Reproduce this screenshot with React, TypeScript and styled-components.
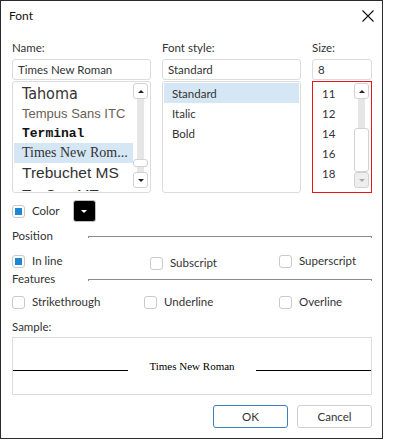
import React from "react";
import styled, { createGlobalStyle, css } from "styled-components";

const GlobalStyle = createGlobalStyle`
  html, body { margin: 0; padding: 0; background: #fff; }
  body {
    font-family: Lato, "Liberation Sans", sans-serif;
    font-size: 11.5px;
    color: #333;
  }
  * { box-sizing: border-box; }
`;

const Dialog = styled.div`
  width: 383px;
  height: 439px;
  border: 1px solid #2b2b2b;
  background: #fff;
  display: flex;
  flex-direction: column;
`;

const TitleBar = styled.div`
  height: 29px;
  display: flex;
  align-items: center;
  justify-content: space-between;
  padding: 0 8px 0 8px;
  font-size: 12px;
  color: #111;
`;

const Body = styled.div`
  padding: 10px 10px 0 11px;
  display: flex;
  flex-direction: column;
`;

const Columns = styled.div`
  display: grid;
  grid-template-columns: 139px 139px 60px;
  column-gap: 11px;
`;

const Column = styled.div`
  display: flex;
  flex-direction: column;
`;

const Label = styled.div`
  line-height: 15px;
  height: 15px;
  margin-bottom: 4px;
`;

const Input = styled.div`
  height: 21px;
  line-height: 19px;
  border: 1px solid #dcdcdc;
  border-radius: 3px;
  padding: 0 5px;
  color: #333;
`;

const List = styled.div<{ $invalid?: boolean }>`
  margin-top: 1px;
  height: 112px;
  border: 1px solid ${({ $invalid }) => ($invalid ? "#e8151b" : "#dcdcdc")};
  border-radius: ${({ $invalid }) => ($invalid ? "0" : "3px")};
  padding: 1px;
  display: flex;
  overflow: hidden;
`;

const Items = styled.div`
  flex: 1;
  display: flex;
  flex-direction: column;
  overflow: hidden;
`;

const Item = styled.div<{
  $selected?: boolean;
  $font?: string;
  $size?: number;
  $weight?: number;
  $color?: string;
  $drop?: number;
}>`
  flex: 0 0 20px;
  height: 20px;
  display: flex;
  align-items: center;
  padding-left: 8px;
  padding-top: ${({ $drop }) => $drop || 0}px;
  white-space: nowrap;
  overflow: hidden;
  background: ${({ $selected }) => ($selected ? "#d5e6f5" : "transparent")};
  font-family: ${({ $font }) => $font || "inherit"};
  font-size: ${({ $size }) => ($size ? `${$size}px` : "inherit")};
  font-weight: ${({ $weight }) => $weight || 400};
  color: ${({ $color }) => $color || "#333"};
`;

const Scrollbar = styled.div`
  width: 15px;
  margin: 0 1px 3px 0;
  display: flex;
  flex-direction: column;
`;

const ScrollButton = styled.div<{ $disabled?: boolean }>`
  height: 16px;
  border: 1px solid #d2d2d2;
  border-radius: 3px;
  background: ${({ $disabled }) => ($disabled ? "#eeeeee" : "#fff")};
  display: flex;
  align-items: center;
  justify-content: center;
`;

const Arrow = styled.span<{ $down?: boolean; $disabled?: boolean }>`
  width: 0;
  height: 0;
  border-left: 3px solid transparent;
  border-right: 3px solid transparent;
  ${({ $down, $disabled }) =>
    $down
      ? css`border-top: 3px solid ${$disabled ? "#aaa" : "#222"};`
      : css`border-bottom: 3px solid ${$disabled ? "#aaa" : "#222"};`}
`;

const Track = styled.div`
  flex: 1;
  background: linear-gradient(#e6e6e6, #e6e6e6) center / 7px 100% no-repeat;
`;

const Thumb = styled.div<{ $offset: number; $height: number }>`
  margin-top: ${({ $offset }) => $offset}px;
  height: ${({ $height }) => $height}px;
  border: 1px solid #d2d2d2;
  border-radius: 3px;
  background: #fff;
`;

const Row = styled.div<{ $top: number }>`
  margin-top: ${({ $top }) => $top}px;
  display: flex;
  align-items: center;
`;

const Box = styled.span<{ $checked?: boolean }>`
  width: 13px;
  height: 13px;
  flex: 0 0 13px;
  border: 1px solid #cacaca;
  border-radius: 3px;
  background: #fff;
  display: flex;
  align-items: center;
  justify-content: center;
  &::after {
    content: "";
    width: 7px;
    height: 7px;
    background: ${({ $checked }) => ($checked ? "#1f86d3" : "transparent")};
  }
`;

const CheckText = styled.span`
  margin-left: 7px;
  line-height: 14px;
`;

const Check = styled.label<{ $shift?: number }>`
  display: flex;
  align-items: center;
  height: 14px;
  margin-top: ${({ $shift }) => $shift || 0}px;
`;

const ColorButton = styled.div`
  margin-left: 13px;
  width: 23px;
  height: 22px;
  background: #000;
  border: 1px solid #bdbdbd;
  border-radius: 3px;
  display: flex;
  align-items: center;
  justify-content: center;
`;

const WhiteArrow = styled.span`
  width: 0;
  height: 0;
  border-left: 3px solid transparent;
  border-right: 3px solid transparent;
  border-top: 3px solid #fff;
`;

const Section = styled.div<{ $top: number }>`
  margin-top: ${({ $top }) => $top}px;
  height: 14px;
  line-height: 14px;
  display: grid;
  grid-template-columns: 76px 1fr;
  align-items: center;
`;

const Rule = styled.div`
  height: 1px;
  background: #8c8c8c;
  position: relative;
  &::before,
  &::after {
    content: "";
    position: absolute;
    top: 1px;
    width: 1px;
    height: 1px;
    background: #8c8c8c;
  }
  &::before { left: 0; }
  &::after { right: 0; }
`;

const Options = styled.div<{ $cols: string; $top: number }>`
  margin-top: ${({ $top }) => $top}px;
  display: grid;
  grid-template-columns: ${({ $cols }) => $cols};
  align-items: start;
  height: 14px;
`;

const SampleLabel = styled.div`
  margin-top: 11px;
  line-height: 14px;
  height: 14px;
`;

const SampleBox = styled.div`
  margin-top: 3px;
  height: 58px;
  border: 1px solid #dcdcdc;
  display: grid;
  grid-template-columns: 1fr auto 1fr;
  column-gap: 21px;
  align-items: center;
`;

const SampleLine = styled.div`
  height: 1px;
  background: #000;
  margin-top: 8px;
`;

const SampleText = styled.span`
  font-family: "Liberation Serif", serif;
  font-size: 11px;
  color: #000;
`;

const Buttons = styled.div`
  margin-top: 10px;
  display: flex;
  justify-content: flex-end;
  gap: 9px;
`;

const Button = styled.button<{ $primary?: boolean }>`
  width: 75px;
  height: 23px;
  border: 1px solid ${({ $primary }) => ($primary ? "#3b82bd" : "#d0d0d0")};
  border-radius: 3px;
  background: #fff;
  font: inherit;
  color: #333;
  padding: 0;
`;

const CloseIcon = () => (
  <svg width="12" height="12" viewBox="0 0 12 12">
    <path d="M0.5 0.5 L11.5 11.5 M11.5 0.5 L0.5 11.5" stroke="#111" strokeWidth="1.1" fill="none" />
  </svg>
);

const fonts = [
  { name: "Tahoma", font: '"DejaVu Sans Condensed", "DejaVu Sans", sans-serif', size: 16 },
  { name: "Tempus Sans ITC", font: '"Liberation Sans", sans-serif', size: 13, color: "#6b5e55" },
  { name: "Terminal", font: '"Liberation Mono", monospace', size: 13, weight: 700, color: "#111" },
  { name: "Times New Rom...", font: '"Liberation Serif", serif', size: 14, selected: true },
  { name: "Trebuchet MS", font: '"Liberation Sans", sans-serif', size: 15.5 },
  { name: "Tw Cen MT", font: '"Liberation Sans", sans-serif', size: 15, drop: 3 },
];

const styles = ["Standard", "Italic", "Bold"];
const sizes = ["11", "12", "14", "16", "18"];

const ScrollBarView: React.FC<{ offset: number; height: number; downDisabled?: boolean }> = ({
  offset,
  height,
  downDisabled,
}) => (
  <Scrollbar>
    <ScrollButton>
      <Arrow />
    </ScrollButton>
    <Track>
      <Thumb $offset={offset} $height={height} />
    </Track>
    <ScrollButton $disabled={downDisabled}>
      <Arrow $down $disabled={downDisabled} />
    </ScrollButton>
  </Scrollbar>
);

export default function App() {
  return (
    <>
      <GlobalStyle />
      <Dialog>
        <TitleBar>
          <span>Font</span>
          <CloseIcon />
        </TitleBar>
        <Body>
          <Columns>
            <Column>
              <Label>Name:</Label>
              <Input>Times New Roman</Input>
              <List>
                <Items>
                  {fonts.map((f) => (
                    <Item
                      key={f.name}
                      $selected={f.selected}
                      $font={f.font}
                      $size={f.size}
                      $weight={f.weight}
                      $color={f.color}
                      $drop={f.drop}
                    >
                      {f.name}
                    </Item>
                  ))}
                </Items>
                <ScrollBarView offset={60} height={8} />
              </List>
            </Column>
            <Column>
              <Label>Font style:</Label>
              <Input>Standard</Input>
              <List>
                <Items>
                  {styles.map((s, i) => (
                    <Item key={s} $selected={i === 0}>
                      {s}
                    </Item>
                  ))}
                </Items>
              </List>
            </Column>
            <Column>
              <Label>Size:</Label>
              <Input>8</Input>
              <List $invalid>
                <Items>
                  {sizes.map((s) => (
                    <Item key={s}>{s}</Item>
                  ))}
                </Items>
                <ScrollBarView offset={29} height={44} downDisabled />
              </List>
            </Column>
          </Columns>

          <Row $top={7}>
            <Check>
              <Box $checked />
              <CheckText>Color</CheckText>
            </Check>
            <ColorButton>
              <WhiteArrow />
            </ColorButton>
          </Row>

          <Section $top={7}>
            <span>Position</span>
            <Rule />
          </Section>
          <Options $cols="138px 129px 1fr" $top={11}>
            <Check>
              <Box $checked />
              <CheckText>In line</CheckText>
            </Check>
            <Check $shift={2}>
              <Box />
              <CheckText>Subscript</CheckText>
            </Check>
            <Check>
              <Box />
              <CheckText>Superscript</CheckText>
            </Check>
          </Options>

          <Section $top={4}>
            <span>Features</span>
            <Rule />
          </Section>
          <Options $cols="132px 135px 1fr" $top={9}>
            <Check>
              <Box />
              <CheckText>Strikethrough</CheckText>
            </Check>
            <Check>
              <Box />
              <CheckText>Underline</CheckText>
            </Check>
            <Check>
              <Box />
              <CheckText>Overline</CheckText>
            </Check>
          </Options>

          <SampleLabel>Sample:</SampleLabel>
          <SampleBox>
            <SampleLine />
            <SampleText>Times New Roman</SampleText>
            <SampleLine />
          </SampleBox>

          <Buttons>
            <Button $primary>OK</Button>
            <Button>Cancel</Button>
          </Buttons>
        </Body>
      </Dialog>
    </>
  );
}
